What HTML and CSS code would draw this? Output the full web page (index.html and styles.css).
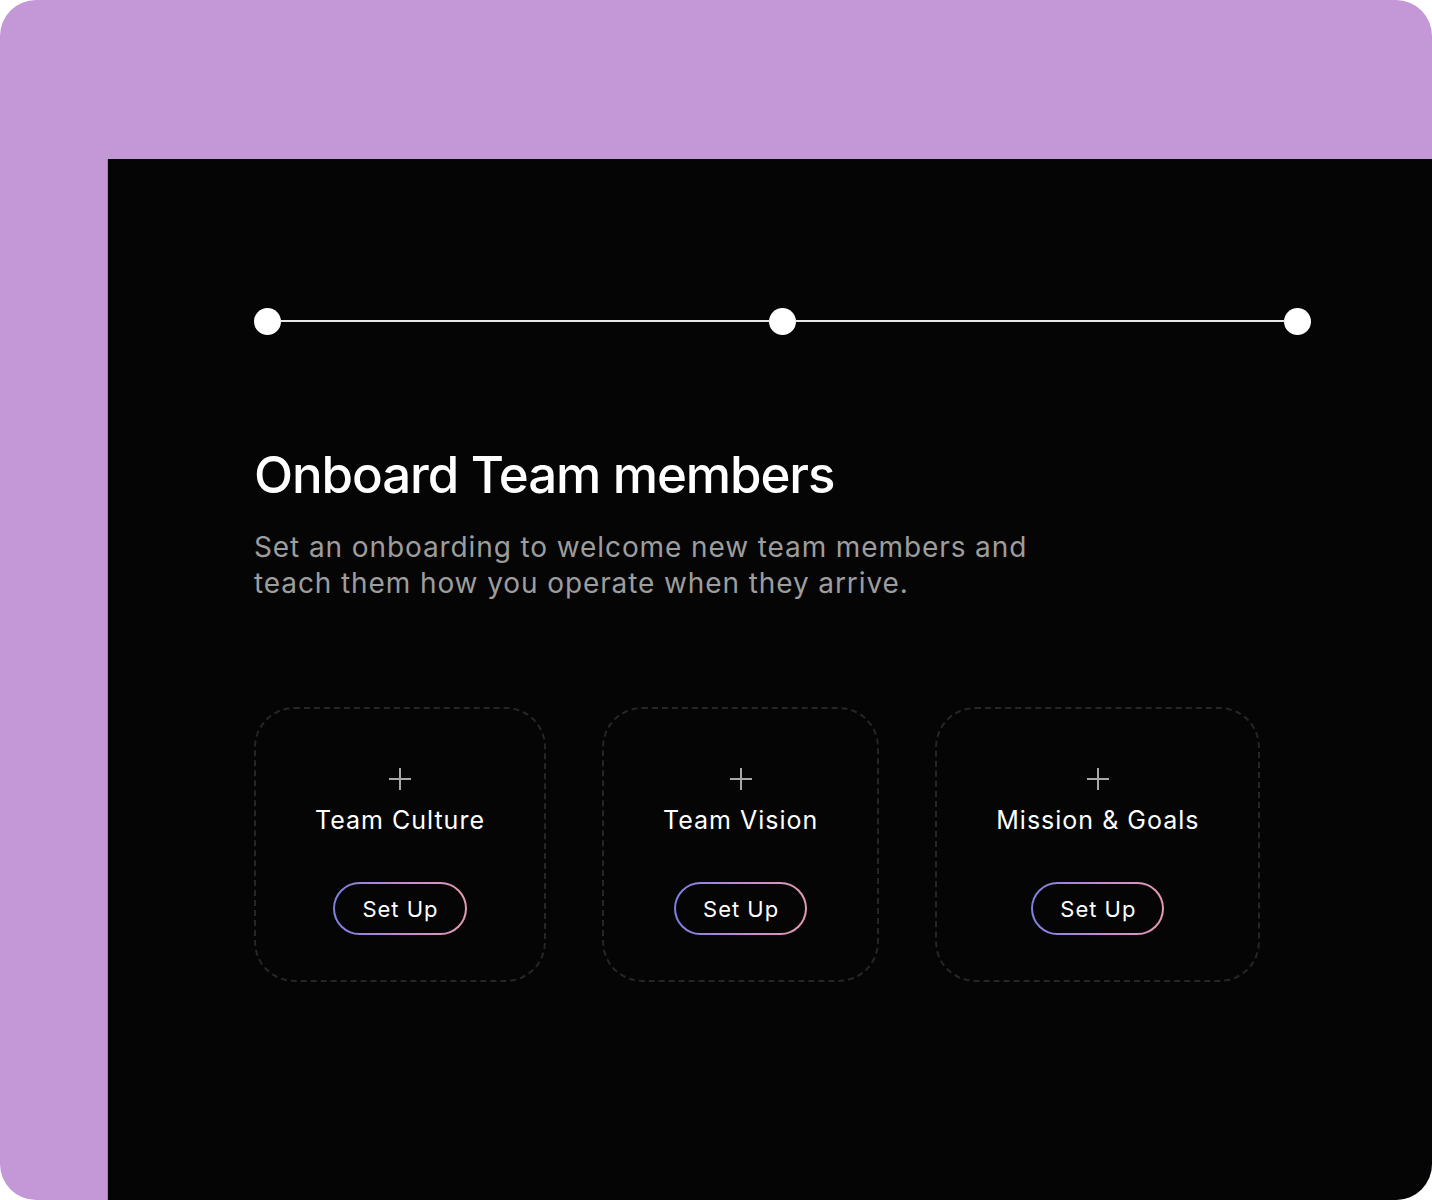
FILE: index.html
```html
<!DOCTYPE html>
<html lang="en">
<head>
  <meta charset="UTF-8">
  <meta name="viewport" content="width=device-width, initial-scale=1.0">
  <title>Onboard Team members</title>
  <link rel="stylesheet" href="styles.css">
</head>
<body>
  <div class="frame">
    <main class="panel">
      <!-- Progress stepper -->
      <div class="stepper">
        <span class="step-dot"></span>
        <span class="step-line"></span>
        <span class="step-dot"></span>
        <span class="step-line"></span>
        <span class="step-dot"></span>
      </div>

      <h1>Onboard Team members</h1>
      <p class="intro">Set an onboarding to welcome new team members and<br>teach them how you operate when they arrive.</p>

      <div class="card-list">
        <div class="card">
          <svg class="plus" width="24" height="24" viewBox="0 0 24 24"><path d="M12 1v22M1 12h22" stroke="#a9a9a9" stroke-width="2" fill="none"/></svg>
          <h3>Team Culture</h3>
          <button>Set Up</button>
        </div>
        <div class="card">
          <svg class="plus" width="24" height="24" viewBox="0 0 24 24"><path d="M12 1v22M1 12h22" stroke="#a9a9a9" stroke-width="2" fill="none"/></svg>
          <h3>Team Vision</h3>
          <button>Set Up</button>
        </div>
        <div class="card">
          <svg class="plus" width="24" height="24" viewBox="0 0 24 24"><path d="M12 1v22M1 12h22" stroke="#a9a9a9" stroke-width="2" fill="none"/></svg>
          <h3>Mission &amp; Goals</h3>
          <button>Set Up</button>
        </div>
      </div>
    </main>
  </div>
</body>
</html>
```

FILE: styles.css
```css
body {
  margin: 0;
  background: #ffffff;
  font-family: Inter, "Open Sans", sans-serif;
}
.frame {
  height: 1200px;
  box-sizing: border-box;
  padding: 159px 0 0 107px;
  background: #c497d6;
  border-radius: 36px;
  overflow: hidden;
  display: flex;
}
.panel {
  flex: 1;
  background: #050505;
  border-left: 1px solid #8b86d8;
  padding: 148px 0 0 146px;
  color: #ffffff;
}
.stepper {
  width: 1057px;
  height: 28px;
  display: flex;
  align-items: center;
}
.step-dot {
  width: 27px;
  height: 27px;
  border-radius: 50%;
  background: #ffffff;
  flex: none;
}
.step-line {
  flex: 1;
  height: 2px;
  background: #e8e8e8;
}
h1 {
  margin: 108px 0 0;
  font-size: 51px;
  line-height: 64px;
  font-weight: 500;
  letter-spacing: -1.1px;
}
.intro {
  margin: 22px 0 0;
  font-size: 28px;
  line-height: 36px;
  color: #9d9d9d;
  letter-spacing: 0.9px;
}
.card-list {
  display: flex;
  gap: 56px;
  margin-top: 106px;
}
.card {
  display: flex;
  flex-direction: column;
  align-items: center;
  padding: 58px 59px 45px;
  border: 2px dashed #262626;
  border-radius: 40px;
}
.plus {
  display: block;
}
.card h3 {
  margin: 13px 0 0;
  font-size: 25px;
  line-height: 32px;
  font-weight: 400;
  letter-spacing: 1px;
  white-space: nowrap;
}
button {
  margin-top: 46px;
  height: 53px;
  padding: 0 26px 0 27px;
  border: 2px solid transparent;
  border-radius: 27px;
  background: linear-gradient(#050505, #050505) padding-box,
    linear-gradient(90deg, #7c7fe0, #c98ad0 55%, #e59ab2) border-box;
  color: #ffffff;
  font-family: Inter, "Open Sans", sans-serif;
  font-size: 22px;
  letter-spacing: 1px;
  cursor: pointer;
}
```
